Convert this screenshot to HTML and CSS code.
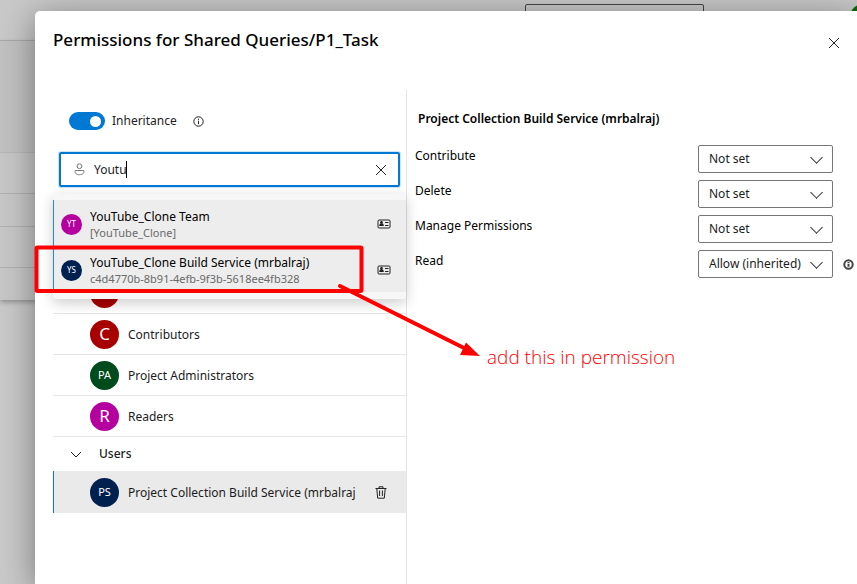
FILE: index.html
```html
<!DOCTYPE html>
<html lang="en">
<head>
<meta charset="utf-8">
<title>Permissions for Shared Queries/P1_Task</title>
<link rel="stylesheet" href="styles.css">
</head>
<body>
<div class="backdrop" aria-hidden="true">
  <div class="topbar"><span class="topbar-search"></span><span class="topbar-user"></span></div>
  <div class="sheet">
    <div class="sheet-head"></div>
    <div class="sheet-row tall"></div>
    <div class="sheet-row"></div>
    <div class="sheet-row tall"></div>
  </div>
</div>

<main class="dialog" role="dialog" aria-labelledby="title">
  <header class="dialog-head">
    <h1 id="title">Permissions for Shared Queries/P1_Task</h1>
    <button class="icon-btn" aria-label="Close">
      <svg width="12" height="12" viewBox="0 0 12 12"><path d="M1 1l10 10M11 1L1 11"/></svg>
    </button>
  </header>

  <div class="columns">
    <section class="people">
      <div class="inherit">
        <input class="toggle" type="checkbox" role="switch" id="inherit" checked>
        <label for="inherit">Inheritance</label>
        <svg class="info" width="11" height="11" viewBox="0 0 11 11"><circle cx="5.5" cy="5.5" r="4.7"/><path d="M5.5 4.8v3.4M5.5 2.7v1.2"/></svg>
      </div>

      <div class="picker">
        <div class="search">
          <svg width="11" height="13" viewBox="0 0 11 13"><circle cx="5.5" cy="3.2" r="2.4"/><path d="M1.2 7.5h8.6c.6 2.6-1.2 4.2-4.3 4.2S.6 10.100 1.200 7.500z"/></svg>
          <input type="text" value="Youtu" aria-label="Search for users or groups">
          <span class="caret"></span>
          <button class="icon-btn" aria-label="Clear">
            <svg width="12" height="12" viewBox="0 0 12 12"><path d="M1 1l10 10M11 1L1 11"/></svg>
          </button>
        </div>
        <ul class="suggestions">
          <li>
            <span class="avatar small magenta">YT</span>
            <span class="who"><span class="name">YouTube_Clone Team</span><span class="detail">[YouTube_Clone]</span></span>
            <svg class="card" width="14" height="10" viewBox="0 0 14 10"><rect x="1" y="1" width="12" height="8" rx="1"/><path d="M8 3.500h3.500M8 6.500h3.500"/><path class="solid" d="M4.500 2a1.300 1.300 0 0 1 .8 2.400c1 .3 1.500 1 1.500 2.600h-4.600c0-1.600.5-2.300 1.500-2.600A1.300 1.300 0 0 1 4.500 2z"/></svg>
          </li>
          <li>
            <span class="avatar small navy">YS</span>
            <span class="who"><span class="name">YouTube_Clone Build Service (mrbalraj)</span><span class="detail">c4d4770b-8b91-4efb-9f3b-5618ee4fb328</span></span>
            <svg class="card" width="14" height="10" viewBox="0 0 14 10"><rect x="1" y="1" width="12" height="8" rx="1"/><path d="M8 3.500h3.500M8 6.500h3.500"/><path class="solid" d="M4.500 2a1.300 1.300 0 0 1 .8 2.400c1 .3 1.500 1 1.500 2.600h-4.600c0-1.600.5-2.300 1.500-2.600A1.300 1.300 0 0 1 4.500 2z"/></svg>
          </li>
        </ul>
      </div>

      <ul class="identities">
        <li><span class="avatar red"></span></li>
        <li><span class="avatar red big">C</span><span class="label">Contributors</span></li>
        <li><span class="avatar green">PA</span><span class="label">Project Administrators</span></li>
        <li><span class="avatar magenta big">R</span><span class="label">Readers</span></li>
      </ul>
      <button class="group" aria-expanded="true">
        <svg width="12" height="7" viewBox="0 0 12 7"><path d="M1 1l5 5 5-5"/></svg>
        Users
      </button>
      <ul class="identities users">
        <li class="selected">
          <span class="avatar navy">PS</span><span class="label">Project Collection Build Service (mrbalraj)</span>
          <button class="icon-btn" aria-label="Remove">
            <svg width="12" height="13" viewBox="0 0 12 13"><path d="M.5 2.500h11M4 2.300V.8h4v1.500M1.800 2.700l.9 9.500h6.600l.9-9.500M4.600 4.500v5.500M7.400 4.500v5.500"/></svg>
          </button>
        </li>
      </ul>
    </section>

    <section class="permissions">
      <h2>Project Collection Build Service (mrbalraj)</h2>
      <div class="perm"><label for="p1">Contribute</label><select id="p1"><option>Not set</option></select></div>
      <div class="perm"><label for="p2">Delete</label><select id="p2"><option>Not set</option></select></div>
      <div class="perm"><label for="p3">Manage Permissions</label><select id="p3"><option>Not set</option></select></div>
      <div class="perm"><label for="p4">Read</label><select id="p4"><option>Allow (inherited)</option></select>
        <svg class="info bold" width="11" height="11" viewBox="0 0 11 11"><circle cx="5.500" cy="5.500" r="4.200"/><path d="M5.500 4.800v3M5.500 2.900v1.200"/></svg>
      </div>
    </section>
  </div>
</main>

<svg class="markup" width="857" height="584" viewBox="0 0 857 584" aria-hidden="true">
  <rect x="36.500" y="247.500" width="325" height="43.500" rx="1"/>
  <path d="M340 286L466 349"/>
  <path class="head" d="M466 342.500L480 356l-20-1z"/>
</svg>
<p class="note">add this in permission</p>
</body>
</html>
```
FILE: styles.css
```css
* { box-sizing: border-box; }
body {
  margin: 0;
  min-height: 100vh;
  display: grid;
  overflow: hidden;
  background: #c8c8c8;
  color: #1c1c1c;
  font: 12px/18px "Noto Sans", "Open Sans", sans-serif;
}
h1, h2, p, ul { margin: 0; padding: 0; }
ul { list-style: none; }
button, input, select { font: inherit; color: inherit; margin: 0; }
svg { flex: none; fill: none; stroke: #222; }

.backdrop, .dialog { grid-area: 1 / 1; min-width: 0; }
.topbar {
  display: flex;
  justify-content: flex-end;
  gap: 146px;
  height: 41px;
  padding-top: 4px;
  margin-right: -19px;
  border-bottom: 1px solid #b0b0b0;
}
.topbar-search { width: 179px; height: 24px; border: 1px solid #444; border-radius: 2px; }
.topbar-user { width: 26px; height: 26px; border-radius: 50%; background: #0b6a0b; }
.sheet { background: #c6c6c6; box-shadow: 0 2px 5px rgba(0, 0, 0, .3); }
.sheet-head { height: 112px; background: #c0c0c0; border-bottom: 1px solid #b5b5b5; }
.sheet-row { height: 33px; border-bottom: 1px solid #b0b0b0; }
.sheet-row.tall { height: 41px; }
.sheet::after { content: ""; display: block; height: 32px; }

.dialog {
  display: flex;
  flex-direction: column;
  margin: 11px 0 0 35px;
  background: #fff;
  border-radius: 5px 0 0 0;
  box-shadow: 0 6px 32px rgba(0, 0, 0, .4);
}
.dialog-head {
  display: flex;
  align-items: flex-start;
  justify-content: space-between;
  height: 79px;
  padding: 16px 17px 0 18px;
}
h1 { color: #000; font-size: 17px; line-height: 26px; font-weight: 500; }
.icon-btn { display: flex; padding: 0; border: 0; background: none; }
.dialog-head .icon-btn { padding-top: 10px; }

.columns { flex: 1; display: grid; grid-template-columns: 354px 1fr; padding-left: 18px; }
.people { border-right: 1px solid #e4e4e4; }
.inherit { display: flex; align-items: center; height: 62px; padding-left: 16px; }
.inherit label { margin: 0 16px 0 7px; }
.toggle {
  appearance: none;
  display: flex;
  align-items: center;
  justify-content: flex-end;
  width: 36px;
  height: 18px;
  padding: 4px;
  border-radius: 9px;
  background: #0078d4;
}
.toggle::before { content: ""; width: 11px; height: 11px; border-radius: 50%; background: #fff; }

.picker { position: relative; }
.search {
  display: flex;
  align-items: center;
  height: 35px;
  margin: 0 6px;
  padding: 0 11px 0 13px;
  border: 2px solid #0078d4;
  border-radius: 2px;
  box-shadow: 0 0 0 1px #cfe5f7;
  position: relative;
}
.search > svg { stroke: #777; }
.search input { flex: 1; min-width: 0; padding: 0; margin-left: 9px; border: 0; outline: 0; background: none; }
.caret { position: absolute; left: 65px; top: 7px; width: 1px; height: 17px; background: #000; }
.suggestions {
  position: absolute;
  top: 42px;
  left: 0;
  right: 0;
  padding: 6px 0 7px;
  background: #f7f7f7;
  border-radius: 3px;
  box-shadow: 0 4px 14px rgba(0, 0, 0, .2);
}
.suggestions li {
  display: flex;
  align-items: center;
  height: 46px;
  padding: 2px 15px 0 7px;
  background: #ededed;
  border-left: 1px solid #2b88d8;
}
.who { flex: 1; display: flex; flex-direction: column; margin-left: 8px; }
.name { color: #000; line-height: 18px; }
.detail { color: #6a6a6a; font-size: 11px; line-height: 14px; }
.card .solid { fill: #222; stroke: none; }

.avatar {
  flex: none;
  display: flex;
  align-items: center;
  justify-content: center;
  width: 29px;
  height: 29px;
  border-radius: 50%;
  color: #fff;
  font-size: 11px;
}
.avatar.big { font-size: 17px; }
.avatar.small { width: 21px; height: 21px; font-size: 8px; }
.red { background: #a80000; }
.green { background: #004b1c; }
.magenta { background: #b4009e; }
.navy { background: #002050; }

.identities { padding-top: 86px; }
.identities li {
  display: flex;
  align-items: center;
  height: 41px;
  padding-left: 37px;
  border-bottom: 1px solid #e6e6e6;
}
.label { flex: 1; min-width: 0; margin-left: 9px; padding-top: 1px; white-space: nowrap; overflow: hidden; }
.identities.users { padding: 0; }
.identities .selected {
  height: 42px;
  padding: 0 19px 0 36px;
  background: #eaeaea;
  border-left: 1px solid #0078d4;
  border-bottom: 0;
}
.selected .icon-btn { margin-left: 20px; }
.group {
  display: flex;
  align-items: center;
  gap: 17px;
  width: 100%;
  height: 34px;
  padding: 0 0 0 17px;
  border: 0;
  background: none;
  font-weight: 500;
}

.permissions { padding: 20px 0 0 8px; }
h2 { margin: 0 0 17px 3px; color: #000; font-size: 12px; line-height: 18px; font-weight: 600; }
.perm {
  display: grid;
  grid-template-columns: 1fr 135px 24px;
  align-items: center;
  margin-bottom: 7px;
}
.perm select {
  appearance: none;
  height: 28px;
  padding: 0 20px 0 10px;
  border: 1px solid #767676;
  border-radius: 2px;
  background: #fff;
}
.perm::before {
  content: "";
  grid-area: 1 / 2;
  justify-self: end;
  z-index: 1;
  width: 8px;
  height: 8px;
  margin: 0 12px 4px 0;
  border: solid #333;
  border-width: 0 1px 1px 0;
  transform: rotate(45deg);
  pointer-events: none;
}
.perm label { grid-area: 1 / 1; align-self: start; line-height: 22px; color: #000; }
.perm select { grid-area: 1 / 2; }
.perm .info { grid-area: 1 / 3; margin-left: 10px; }
.bold { stroke: #444; stroke-width: 2; }

.markup { position: absolute; left: 0; top: 0; pointer-events: none; }
.markup rect, .markup path { stroke: #f00; stroke-width: 4; stroke-linecap: round; }
.markup .head { fill: #f00; stroke: none; }
.note {
  position: absolute;
  left: 487px;
  top: 345px;
  color: #f00;
  font: 300 19px/24px "Open Sans", "Noto Sans", sans-serif;
}
```
